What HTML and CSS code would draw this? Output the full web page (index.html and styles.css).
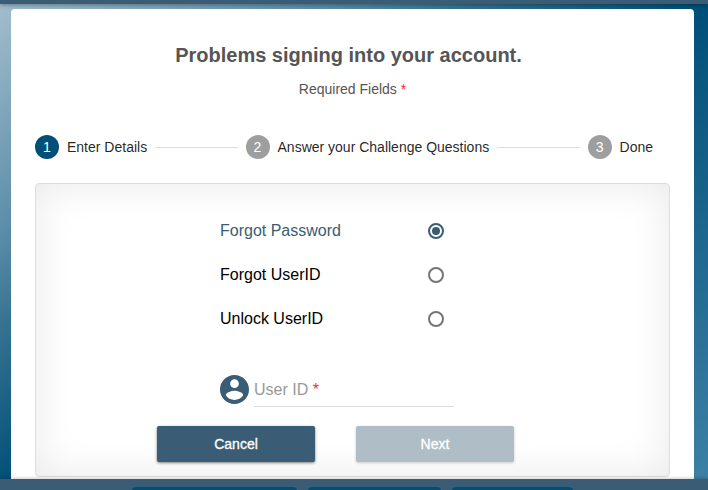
FILE: index.html
```html
<!DOCTYPE html>
<html lang="en">
<head>
<meta charset="utf-8">
<meta name="viewport" content="width=device-width, initial-scale=1">
<title>Problems signing into your account</title>
<link rel="stylesheet" href="styles.css">
</head>
<body>
<header class="topbar"></header>
<main class="page">
  <section class="card">
    <h1 class="title">Problems signing into your account.</h1>
    <p class="required-note">Required Fields <span class="asterisk">*</span></p>
    <ol class="stepper">
      <li class="step step-active"><span class="step-number">1</span>Enter Details</li>
      <li class="step-line" role="presentation"></li>
      <li class="step"><span class="step-number">2</span>Answer your Challenge Questions</li>
      <li class="step-line" role="presentation"></li>
      <li class="step"><span class="step-number">3</span>Done</li>
    </ol>
    <div class="panel">
      <form class="form">
        <div class="fields">
          <div class="option">
            <label for="forgot-password">Forgot Password</label>
            <input type="radio" name="problem" id="forgot-password" checked>
          </div>
          <div class="option">
            <label for="forgot-userid">Forgot UserID</label>
            <input type="radio" name="problem" id="forgot-userid">
          </div>
          <div class="option">
            <label for="unlock-userid">Unlock UserID</label>
            <input type="radio" name="problem" id="unlock-userid">
          </div>
          <div class="user-field">
            <svg class="user-icon" viewBox="2 2 20 20" aria-hidden="true"><path d="M12 2C6.48 2 2 6.48 2 12s4.480 10 10 10 10-4.480 10-10S17.520 2 12 2zm0 3c1.660 0 3 1.340 3 3s-1.340 3-3 3-3-1.340-3-3 1.340-3 3-3zm0 14.200c-2.500 0-4.710-1.280-6-3.220.03-1.990 4-3.080 6-3.080 1.990 0 5.970 1.090 6 3.080-1.290 1.940-3.500 3.220-6 3.220z"/></svg>
            <div class="user-input">
              <input type="text" id="user-id" placeholder=" " required>
              <label for="user-id">User ID <span class="asterisk">*</span></label>
            </div>
          </div>
        </div>
        <div class="actions">
          <button type="button" class="button">Cancel</button>
          <button type="submit" class="button" disabled>Next</button>
        </div>
      </form>
    </div>
  </section>
</main>
<footer class="footer">
  <span class="footer-tab tab-wide"></span>
  <span class="footer-tab tab-medium"></span>
  <span class="footer-tab tab-small"></span>
</footer>
</body>
</html>
```
FILE: styles.css
```css
* {
  box-sizing: border-box;
}

body {
  display: flex;
  flex-direction: column;
  height: 100vh;
  margin: 0;
  overflow: hidden;
  background: linear-gradient(to bottom right, #a3becd, #578aa7 25%, #34718f 34%, #004f78 50%, #3f81a6);
  font-family: "Liberation Sans", Arial, sans-serif;
  font-size: 16px;
  color: #000;
}

.topbar {
  flex: none;
  height: 4px;
  background: #3a5c74;
  box-shadow: 0 1px 4px rgba(0, 0, 0, 0.4);
}

.page {
  flex: 1;
  min-height: 0;
  padding: 5px 14px 0 11px;
  overflow: hidden;
}

.card {
  padding: 32px 24px 24px;
  border-radius: 4px;
  background: #fff;
}

.title {
  margin: 0;
  padding-right: 8px;
  font-size: 20px;
  line-height: 28px;
  text-align: center;
  color: #555;
}

.required-note {
  margin: 10px 0 0;
  font-size: 14px;
  line-height: 20px;
  text-align: center;
  color: #555;
}

.asterisk {
  color: #ff2a2a;
}

.stepper {
  display: flex;
  align-items: center;
  gap: 8px;
  margin: 36px 0 24px;
  padding: 0 17px 0 0;
  list-style: none;
  font-size: 14px;
  line-height: 24px;
  color: rgba(0, 0, 0, 0.87);
}

.step {
  display: flex;
  align-items: center;
  gap: 8px;
  white-space: nowrap;
}

.step-number {
  width: 24px;
  height: 24px;
  border-radius: 50%;
  background: #9e9e9e;
  text-align: center;
  color: #fff;
}

.step-active .step-number {
  background: #004f78;
}

.step-line {
  flex: 1;
  height: 1px;
  background: #ddd;
}

.panel {
  padding: 25px 34px 14px 0;
  border: 1px solid #ddd;
  border-radius: 4px;
  box-shadow: inset 0 0 40px rgba(0, 0, 0, 0.09);
}

.form {
  width: 357px;
  max-width: 100%;
  margin: 0 auto;
}

.fields {
  padding: 0 60px 0 63px;
}

.option {
  display: flex;
  align-items: center;
  justify-content: space-between;
  height: 44px;
  padding-right: 10px;
}

.option:has(:checked) {
  color: #3a5c74;
}

.option input {
  display: grid;
  place-items: center;
  width: 16px;
  height: 16px;
  margin: 0;
  border: 2px solid #757575;
  border-radius: 50%;
  appearance: none;
}

.option input:checked {
  border-color: #3a5c74;
}

.option input:checked::before {
  content: "";
  width: 8px;
  height: 8px;
  border-radius: 50%;
  background: #3a5c74;
}

.user-field {
  display: flex;
  gap: 5px;
  margin-top: 32px;
}

.user-icon {
  flex: none;
  width: 29px;
  height: 29px;
  margin-top: 2px;
  fill: #3a5c74;
}

.user-input {
  display: grid;
  flex: 1;
  height: 34px;
  border-bottom: 1px solid #ddd;
}

.user-input input,
.user-input label {
  grid-area: 1 / 1;
  line-height: 34px;
}

.user-input input {
  width: 100%;
  height: 100%;
  min-width: 0;
  padding: 0;
  border: 0;
  outline: 0;
  background: none;
  font: inherit;
}

.user-input label {
  color: #999;
  pointer-events: none;
}

.user-input input:not(:placeholder-shown) + label {
  visibility: hidden;
}

.actions {
  display: grid;
  grid-template-columns: 1fr 1fr;
  gap: 41px;
  margin-top: 19px;
}

.button {
  height: 36px;
  padding: 0 16px;
  border: 0;
  border-radius: 2px;
  background: #3a5c74;
  box-shadow: 0 1px 3px rgba(0, 0, 0, 0.5);
  font: 14px "Liberation Sans", Arial, sans-serif;
  -webkit-text-stroke: 0.3px;
  color: #fff;
}

.button:disabled {
  background: #afbdc6;
  box-shadow: 0 1px 3px rgba(0, 0, 0, 0.2);
}

.footer {
  display: flex;
  flex: none;
  justify-content: center;
  gap: 11px;
  height: 11px;
  padding: 8px 3px 0 0;
  overflow: hidden;
  background: #3a5c74;
  box-shadow: 0 -1px 3px rgba(0, 0, 0, 0.2);
}

.footer-tab {
  height: 32px;
  border-radius: 4px;
  background: #004f78;
}

.tab-wide {
  width: 165px;
}

.tab-medium {
  width: 133px;
}

.tab-small {
  width: 121px;
}
```
